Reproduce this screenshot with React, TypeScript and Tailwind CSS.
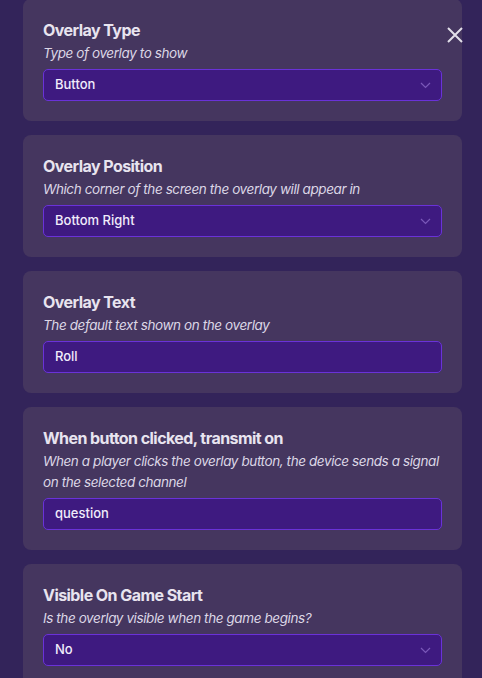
import React from 'react';

type Field = {
  title: string;
  hint: string;
  value: string;
  select: boolean;
};

const fields: Field[] = [
  { title: 'Overlay Type', hint: 'Type of overlay to show', value: 'Button', select: true },
  { title: 'Overlay Position', hint: 'Which corner of the screen the overlay will appear in', value: 'Bottom Right', select: true },
  { title: 'Overlay Text', hint: 'The default text shown on the overlay', value: 'Roll', select: false },
  {
    title: 'When button clicked, transmit on',
    hint: 'When a player clicks the overlay button, the device sends a signal on the selected channel',
    value: 'question',
    select: false,
  },
  { title: 'Visible On Game Start', hint: 'Is the overlay visible when the game begins?', value: 'No', select: true },
];

const Chevron = () => (
  <svg width="11" height="7" viewBox="0 0 11 7" fill="none" className="shrink-0">
    <path d="M1 1l4.5 4.5L10 1" stroke="#7a58b8" strokeWidth="1.2" />
  </svg>
);

const FieldCard = ({ field }: { field: Field }) => (
  <div className="rounded-[8px] bg-[#45365f] p-5">
    <div className="text-base font-bold leading-[22px] tracking-[-0.035em] text-[#e8e4ef]">{field.title}</div>
    <div className="mt-[2px] text-[13.5px] italic leading-[21px] tracking-[-0.03em] text-[#dcd6e6]">{field.hint}</div>
    <div className="mt-[5px] flex h-8 items-center justify-between rounded-[5px] border border-[#6a32d8] bg-[#3e1a80] pl-[11px] pr-[10px]">
      <span className="text-[13px] font-medium text-[#f1ecfb]">{field.value}</span>
      {field.select && <Chevron />}
    </div>
  </div>
);

export default function App() {
  return (
    <div
      className="relative h-[678px] w-[482px] overflow-hidden bg-[#33245a]"
      style={{ fontFamily: 'Inter, "Noto Sans", sans-serif' }}
    >
      <div className="-mt-px ml-[23px] flex w-[439px] flex-col gap-[14px]">
        {fields.map(f => (
          <FieldCard key={f.title} field={f} />
        ))}
      </div>

      {/* Close button */}
      <button className="absolute left-[446px] top-[26px] flex h-[18px] w-[18px] items-center justify-center">
        <svg width="18" height="18" viewBox="0 0 18 18" fill="none">
          <path d="M2 2l14 14M16 2L2 16" stroke="#e2dfe9" strokeWidth="2" />
        </svg>
      </button>
    </div>
  );
}
